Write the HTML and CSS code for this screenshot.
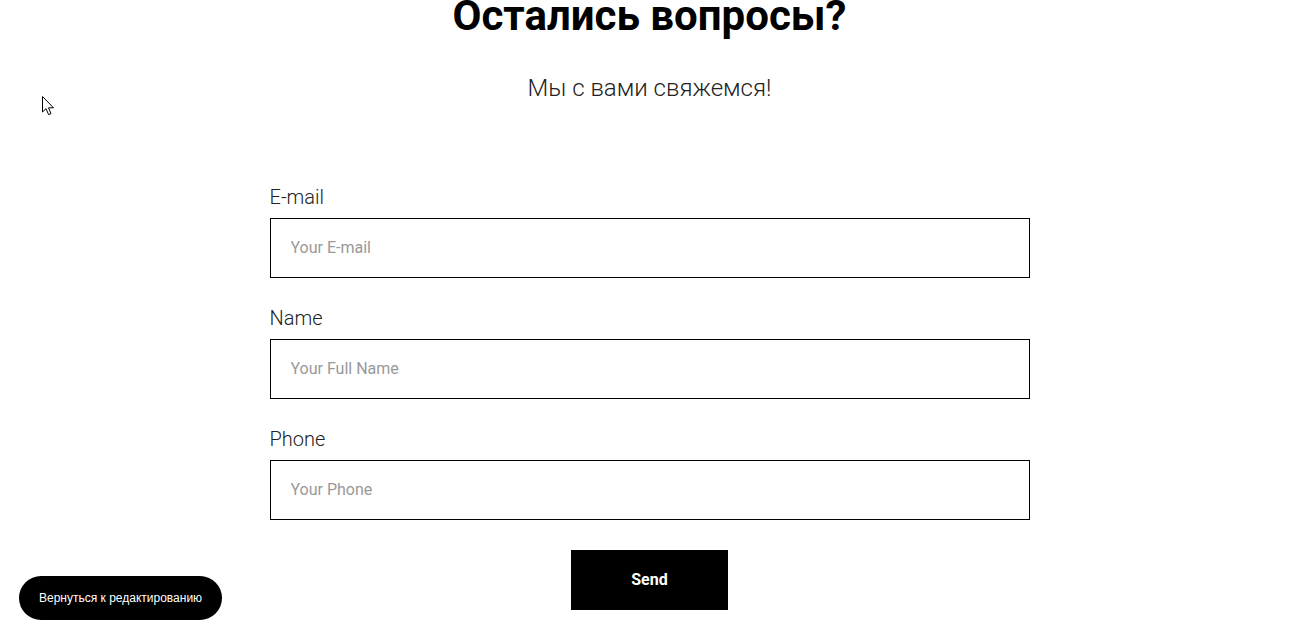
FILE: index.html
```html
<!DOCTYPE html>
<html lang="ru">
<head>
  <meta charset="UTF-8">
  <meta name="viewport" content="width=device-width, initial-scale=1">
  <title>Остались вопросы?</title>
  <link rel="stylesheet" href="styles.css">
</head>
<body>

<div class="contact">
  <h1>Остались вопросы?</h1>
  <p class="subtitle">Мы с вами свяжемся!</p>

  <form class="contact-form">
    <div class="field">
      <label for="email">E-mail</label>
      <input type="text" id="email" placeholder="Your E-mail">
    </div>
    <div class="field">
      <label for="name">Name</label>
      <input type="text" id="name" placeholder="Your Full Name">
    </div>
    <div class="field">
      <label for="phone">Phone</label>
      <input type="text" id="phone" placeholder="Your Phone">
    </div>
    <button type="button" class="send">Send</button>
  </form>
</div>

<button class="back-edit">Вернуться к редактированию</button>

<svg class="cursor" width="13" height="20" viewBox="0 0 13 20">
  <path d="M0.5 0.5 L0.5 16 L4 12.6 L6.6 18.6 L9 17.6 L6.5 11.8 L11.5 11.8 Z" fill="#fff" stroke="#000" stroke-width="1"/>
</svg>

</body>
</html>
```

FILE: styles.css
```css
body {
  font-family: Roboto, "Liberation Sans", sans-serif;
  background-color: #ffffff;
  color: #000;
  margin: 0;
  padding: 0;
}
.contact {
  padding-left: 5px;
  text-align: center;
}
h1 {
  font-size: 42px;
  font-weight: 700;
  line-height: 32px;
  margin: 0;
}
.subtitle {
  font-size: 24px;
  font-weight: 300;
  line-height: 28.8px;
  color: #222;
  margin: 42px 0 0;
}
.contact-form {
  width: 760px;
  margin: 82px auto 0;
  display: flex;
  flex-direction: column;
  gap: 28px;
  text-align: left;
}
.field {
  display: flex;
  flex-direction: column;
  gap: 9px;
}
label {
  font-size: 20px;
  font-weight: 300;
  line-height: 24px;
  color: #222;
}
input {
  box-sizing: border-box;
  height: 60px;
  width: 100%;
  border: 1px solid #000;
  padding: 0 20px;
  font-family: Roboto, sans-serif;
  font-size: 16px;
  color: #000;
  outline: none;
}
input::placeholder {
  color: #999;
}
.send {
  align-self: center;
  margin-top: 2px;
  width: 157px;
  height: 60px;
  background-color: #000;
  color: #fff;
  border: none;
  font-family: Roboto, sans-serif;
  font-size: 16px;
  font-weight: 700;
  cursor: pointer;
}
.back-edit {
  position: fixed;
  left: 19px;
  bottom: 24px;
  height: 44px;
  padding: 0 20px;
  border: none;
  border-radius: 22px;
  background-color: #000;
  color: #fff;
  font-family: "Liberation Sans", Arial, sans-serif;
  font-size: 12px;
  cursor: pointer;
}
.cursor {
  position: absolute;
  left: 42px;
  top: 96px;
}
```
